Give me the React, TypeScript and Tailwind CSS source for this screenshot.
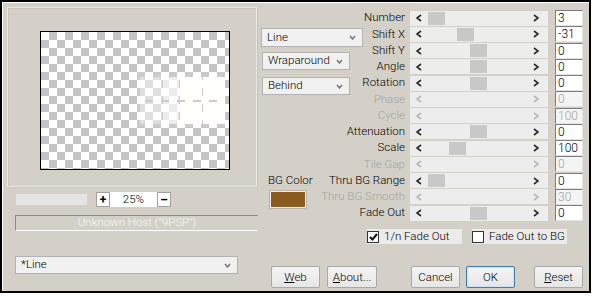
import React from 'react';

const rows: { label: string; value: string; thumb?: number; disabled?: boolean }[] = [
  { label: 'Number', value: '3', thumb: 18 },
  { label: 'Shift X', value: '-31', thumb: 47 },
  { label: 'Shift Y', value: '0', thumb: 60 },
  { label: 'Angle', value: '0', thumb: 60 },
  { label: 'Rotation', value: '0', thumb: 60 },
  { label: 'Phase', value: '0', disabled: true },
  { label: 'Cycle', value: '100', disabled: true },
  { label: 'Attenuation', value: '0', thumb: 60 },
  { label: 'Scale', value: '100', thumb: 39 },
  { label: 'Tile Gap', value: '0', disabled: true },
  { label: 'Thru BG Range', value: '0', thumb: 18 },
  { label: 'Thru BG Smooth', value: '30', disabled: true },
  { label: 'Fade Out', value: '0', thumb: 60 },
];

const Arrow = ({ right, color }: { right?: boolean; color: string }) => (
  <svg width="6" height="8" viewBox="0 0 6 8">
    <polyline
      points={right ? '1,1 5,4 1,7' : '5,1 1,4 5,7'}
      fill="none"
      stroke={color}
      strokeWidth="1.6"
    />
  </svg>
);

const Slider = ({ thumb, disabled }: { thumb?: number; disabled?: boolean }) => {
  const c = disabled ? '#b8b8b8' : '#2b2b2b';
  return (
    <div className="relative flex h-[15px] w-[138px] items-center justify-between bg-[#ededed] pl-[6px] pr-[9px]">
      <Arrow color={c} />
      {thumb !== undefined && (
        <div className="absolute top-[1px] h-[13px] w-[17px] bg-[#c8c8c8]" style={{ left: thumb }} />
      )}
      <Arrow right color={c} />
    </div>
  );
};

const Chevron = () => (
  <svg width="7" height="5" viewBox="0 0 7 5">
    <polyline points="1,1 3.5,4 6,1" fill="none" stroke="#6f6f6f" strokeWidth="1.4" />
  </svg>
);

const Select = ({ label, className }: { label: string; className: string }) => (
  <div className={`flex items-center justify-between border border-[#b2b2b2] bg-[#f1f1f1] pl-[5px] pr-[6px] ${className}`}>
    <span>{label}</span>
    <Chevron />
  </div>
);

const Button = ({ children, ok, className = '' }: { children: React.ReactNode; ok?: boolean; className?: string }) => (
  <div
    className={`flex h-[22px] w-[49px] items-center justify-center rounded-[2px] border bg-gradient-to-b from-[#f4f4f4] to-[#e6e6e6] ${
      ok ? 'border-[#3c7fb1] shadow-[inset_0_0_0_1px_#c4e5f6]' : 'border-[#a8a8a8]'
    } ${className}`}
  >
    {children}
  </div>
);

const Check = ({ checked, label }: { checked?: boolean; label: string }) => (
  <div className="flex h-[15px] w-[95px] items-center gap-[5px] whitespace-nowrap bg-[#ebebeb]">
    <div className="flex h-[12px] w-[12px] items-center justify-center border border-[#333] bg-white">
      {checked && (
        <svg width="9" height="8" viewBox="0 0 9 8">
          <polyline points="1,4 3.5,6.5 8,1" fill="none" stroke="#111" strokeWidth="2" />
        </svg>
      )}
    </div>
    <span>{label}</span>
  </div>
);

export default function App() {
  return (
    <div className="h-[297px] w-[593px] bg-white font-['Roboto','Liberation_Sans',Arial,sans-serif] text-[11.5px] font-light leading-none text-black">
      <div className="flex h-[293px] w-[591px] border-2 border-black bg-[#d4d0c8] shadow-[inset_1px_1px_0_#ffffff]">
        {/* left column */}
        <div className="flex w-[259px] flex-col pl-[5px] pt-[5px]">
          <div className="h-[180px] w-[250px] border border-[#e9e7e1] pl-[32px] pt-[23px] shadow-[inset_1px_1px_0_#c9c5bd,1px_1px_0_#c9c5bd]">
            <div className="relative h-[139px] w-[190px] border border-black bg-[conic-gradient(#c4c4c4_90deg,#ffffff_90deg_180deg,#c4c4c4_180deg_270deg,#ffffff_270deg)] bg-[length:16px_16px]">
              <div className="absolute left-[96px] top-[40px] h-[55px] w-[89px] bg-white/10" />
              <div className="absolute left-[99px] top-[45px] grid grid-cols-[22px_16px_22px_22px] grid-rows-[23px_22px] gap-x-[1px] gap-y-[2px]">
                <div className="bg-white/40" />
                <div className="bg-white/65" />
                <div className="bg-[#fffefa]" />
                <div className="bg-[#fffefa]" />
                <div className="bg-white/40" />
                <div className="bg-white/65" />
                <div className="bg-[#fffefa]" />
                <div className="bg-[#fffefa]" />
              </div>
            </div>
          </div>

          <div className="ml-[8px] mt-[5px] flex items-center gap-[8px]">
            <div className="h-[13px] w-[73px] border border-[#d2d2d2] bg-[#e4e4e4]" />
            <div className="flex h-[15px] w-[75px] items-center justify-between bg-white">
              <div className="flex h-[15px] w-[14px] items-center justify-center border border-[#a0a0a0] text-[12px] font-bold">+</div>
              <span>25%</span>
              <div className="flex h-[15px] w-[14px] items-center justify-center border border-[#a0a0a0] text-[12px] font-bold">–</div>
            </div>
          </div>

          <div className="ml-[8px] mt-[8px] flex h-[16px] w-[243px] items-center justify-center border-t border-b border-l border-[#8c8a85] border-b-white text-[#f8f8f8]">
            Unknown Host ("9PSP")
          </div>

          <Select label="*Line" className="ml-[8px] mt-[25px] h-[18px] w-[223px] bg-[#ececec]" />
        </div>

        {/* right part */}
        <div className="flex flex-1 flex-col">
          <div className="flex">
            <div className="flex w-[102px] flex-col">
              <Select label="Line" className="mt-[26px] h-[19px] w-[102px]" />
              <Select label="Wraparound" className="ml-[1px] mt-[5px] h-[18px] w-[88px]" />
              <Select label="Behind" className="ml-[1px] mt-[7px] h-[18px] w-[88px]" />
              <div className="ml-[7px] mt-[80px]">BG Color</div>
              <div className="ml-[9px] mt-[4px] h-[17px] w-[36px] border border-[#efefef] bg-[#8b5a1f] shadow-[0_0_0_1px_#b8b4ac]" />
            </div>
            <div className="grid auto-rows-[16.25px] pt-[8px]">
              {rows.map((r) => (
                <div key={r.label} className="flex items-center">
                  <div className={`flex w-[42px] justify-end whitespace-nowrap ${r.disabled ? 'text-[#a3a3a3]' : ''}`}>
                    {r.label}
                  </div>
                  <div className="ml-[5px]">
                    <Slider thumb={r.thumb} disabled={r.disabled} />
                  </div>
                  <div
                    className={`ml-[7px] flex h-[16px] w-[28px] items-center border border-t-[#7c7c7c] border-r-[#e2e2e2] border-b-[#e2e2e2] border-l-[#7c7c7c] pl-[2px] text-[12px] ${
                      r.disabled ? 'bg-[#f4f4f4] text-[#a3a3a3]' : 'bg-white'
                    }`}
                  >
                    {r.value}
                  </div>
                </div>
              ))}
            </div>
          </div>

          <div className="ml-[106px] mt-[8px] flex gap-[10px]">
            <Check checked label="1/n Fade Out" />
            <Check label="Fade Out to BG" />
          </div>

          <div className="ml-[10px] mt-[22px] flex">
            <Button>
              <span><u>W</u>eb</span>
            </Button>
            <Button className="ml-[7px] w-[50px]">
              <span><u>A</u>bout...</span>
            </Button>
            <Button className="ml-[34px]">Cancel</Button>
            <Button ok className="ml-[6px]">OK</Button>
            <Button className="ml-[19px]">
              <span><u>R</u>eset</span>
            </Button>
          </div>
        </div>
      </div>
    </div>
  );
}
